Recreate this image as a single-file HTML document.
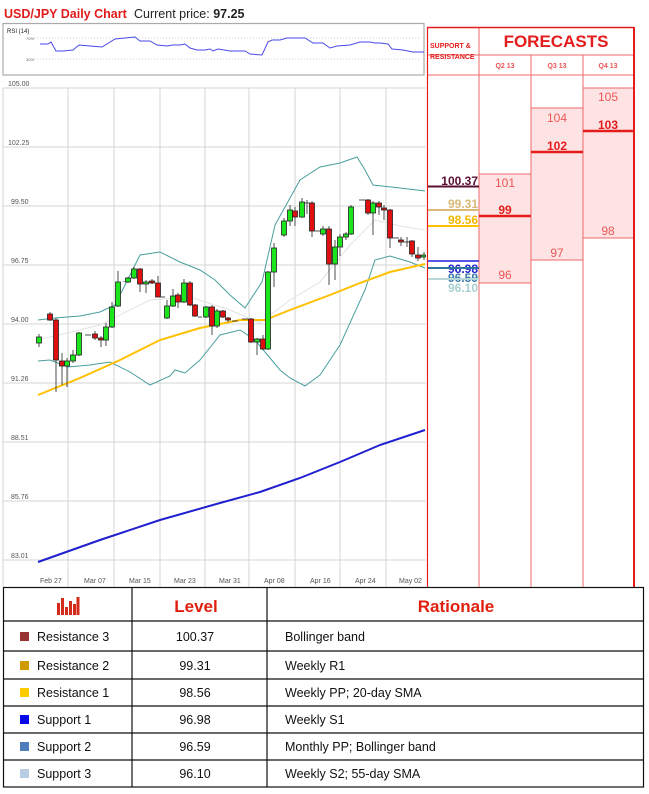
<!DOCTYPE html>
<html><head><meta charset="utf-8"><style>
body{margin:0;width:649px;height:794px;background:#fff;overflow:hidden;font-family:"Liberation Sans",sans-serif}
svg{position:absolute;left:0;top:0}
</style></head><body>
<svg width="649" height="794" viewBox="0 0 649 794" font-family="Liberation Sans, sans-serif">
<text x="4" y="18" fill="#e31b1b" font-size="12.5" font-weight="bold">USD/JPY Daily Chart</text>
<text x="134" y="18" fill="#222" font-size="12.5">Current price: <tspan font-weight="bold">97.25</tspan></text>
<!-- RSI -->
<rect x="3" y="23.5" width="421" height="51.5" fill="#fff" stroke="#aaa" stroke-width="1.2"/>
<text x="7" y="33" font-size="6" fill="#222">RSI (14)</text>
<text x="26" y="40" font-size="4" fill="#666">70%</text><text x="26" y="61" font-size="4" fill="#666">30%</text>
<line x1="34" y1="38" x2="420" y2="38" stroke="#999" stroke-dasharray="1,2" stroke-width="0.6"/>
<line x1="34" y1="59" x2="420" y2="59" stroke="#999" stroke-dasharray="1,2" stroke-width="0.6"/>
<polyline fill="none" stroke="#4a4ae8" stroke-width="1" points="40,44 48,44 51,42 56,51 63,51 73,50 79,45 90,46 102,47 115,39 125,38 135,37 140,41 150,41 157,45 167,46 173,45 180,45 185,44 190,48 197,50 205,50 210,49 213,51 218,49 230,51 245,51 250,54 262,55 268,42 272,40 280,40 287,38 298,38 305,38 313,43 323,43 330,48 337,46 350,45 360,42 370,42 375,43 380,43 388,44 392,49 403,50 413,52 424,52"/>
<!-- grid -->
<g stroke="#d4d4d4" stroke-width="1">
<line x1="3" y1="88" x2="426" y2="88"/><line x1="3" y1="147" x2="426" y2="147"/><line x1="3" y1="206" x2="426" y2="206"/><line x1="3" y1="265" x2="426" y2="265"/><line x1="3" y1="324" x2="426" y2="324"/><line x1="3" y1="383" x2="426" y2="383"/><line x1="3" y1="442" x2="426" y2="442"/><line x1="3" y1="501" x2="426" y2="501"/><line x1="3" y1="560" x2="426" y2="560"/>
<line x1="3" y1="88" x2="3" y2="587"/>
<line x1="68" y1="88" x2="68" y2="587"/><line x1="114" y1="88" x2="114" y2="587"/><line x1="160" y1="88" x2="160" y2="587"/><line x1="205" y1="88" x2="205" y2="587"/><line x1="249" y1="88" x2="249" y2="587"/><line x1="295" y1="88" x2="295" y2="587"/><line x1="340" y1="88" x2="340" y2="587"/><line x1="386" y1="88" x2="386" y2="587"/>
</g>
<g font-size="7" fill="#555">
<text x="8" y="86">105.00</text><text x="8" y="145">102.25</text><text x="11" y="204">99.50</text><text x="11" y="263">96.75</text><text x="11" y="322">94.00</text><text x="11" y="381">91.26</text><text x="11" y="440">88.51</text><text x="11" y="499">85.76</text><text x="11" y="558">83.01</text>
<text x="40" y="583">Feb 27</text><text x="84" y="583">Mar 07</text><text x="129" y="583">Mar 15</text><text x="174" y="583">Mar 23</text><text x="219" y="583">Mar 31</text><text x="264" y="583">Apr 08</text><text x="310" y="583">Apr 16</text><text x="355" y="583">Apr 24</text><text x="399" y="583">May 02</text>
</g>
<!-- indicators -->
<polyline fill="none" stroke="#e2e2e2" stroke-width="1" points="38,340 100,325 150,300 190,297 230,310 260,323 290,300 320,282 350,245 375,220 400,226 425,230"/>
<polyline fill="none" stroke="#4a9e9e" stroke-width="1" points="38,320 55,318 80,316 100,312 115,305 125,285 140,255 160,252 180,262 200,270 215,280 230,295 245,308 262,282 275,225 300,180 320,167 340,163 357,157 365,170 373,185 400,188 425,191"/>
<polyline fill="none" stroke="#4a9e9e" stroke-width="1" points="38,361 50,360 68,367 90,365 110,362 130,372 150,385 170,376 175,370 185,373 200,360 220,335 240,330 255,340 265,352 280,370 290,378 305,386 320,375 340,345 365,290 375,260 390,256 410,262 425,268"/>
<polyline fill="none" stroke="#ffc000" stroke-width="2" points="38,395 80,378 120,360 160,340 200,328 240,320 265,320 290,310 330,295 360,283 390,272 425,264"/>
<polyline fill="none" stroke="#2020d0" stroke-width="2" points="38,562 100,540 160,520 220,503 260,492 300,478 340,462 380,445 425,430"/>
<!-- candles -->
<g stroke="#222" stroke-width="0.8">
<line x1="39" y1="334" x2="39" y2="347"/><rect x="36.5" y="337" width="5" height="6" fill="#1be61b"/>
<line x1="50" y1="312" x2="50" y2="321"/><rect x="47.5" y="314" width="5" height="6" fill="#e01010"/>
<line x1="56" y1="318" x2="56" y2="392"/><rect x="53.5" y="320" width="5" height="40" fill="#e01010"/>
<line x1="62" y1="353" x2="62" y2="385"/><rect x="59.5" y="361" width="5" height="5" fill="#e01010"/>
<line x1="67" y1="358" x2="67" y2="387"/><rect x="64.5" y="361" width="5" height="5" fill="#1be61b"/>
<line x1="73" y1="350" x2="73" y2="363"/><rect x="70.5" y="355" width="5" height="6" fill="#1be61b"/>
<line x1="79" y1="332" x2="79" y2="356"/><rect x="76.5" y="333" width="5" height="22" fill="#1be61b"/>
<line x1="85" y1="335" x2="91" y2="335"/>
<line x1="95" y1="331" x2="95" y2="340"/><rect x="92.5" y="334" width="5" height="4" fill="#e01010"/>
<line x1="101" y1="336" x2="101" y2="347"/><rect x="98.5" y="338" width="5" height="2" fill="#e01010"/>
<line x1="106" y1="323" x2="106" y2="346"/><rect x="103.5" y="327" width="5" height="13" fill="#1be61b"/>
<line x1="112" y1="302" x2="112" y2="328"/><rect x="109.5" y="307" width="5" height="20" fill="#1be61b"/>
<line x1="118" y1="271" x2="118" y2="307"/><rect x="115.5" y="282" width="5" height="24" fill="#1be61b"/>
<line x1="124" y1="281" x2="124" y2="282"/>
<line x1="128" y1="277" x2="128" y2="283"/><rect x="125.5" y="278" width="5" height="4" fill="#1be61b"/>
<line x1="134" y1="267" x2="134" y2="279"/><rect x="131.5" y="269" width="5" height="9" fill="#1be61b"/>
<line x1="140" y1="268" x2="140" y2="292"/><rect x="137.5" y="269" width="5" height="15" fill="#e01010"/>
<line x1="146" y1="280" x2="146" y2="293"/><rect x="143.5" y="282" width="5" height="2" fill="#1be61b"/>
<line x1="152" y1="279" x2="152" y2="284"/><rect x="149.5" y="281" width="5" height="2" fill="#e01010"/>
<line x1="158" y1="276" x2="158" y2="297"/><rect x="155.5" y="283" width="5" height="14" fill="#e01010"/>
<line x1="161" y1="297" x2="165" y2="297"/>
<line x1="167" y1="300" x2="167" y2="319"/><rect x="164.5" y="306" width="5" height="12" fill="#1be61b"/>
<line x1="173" y1="289" x2="173" y2="307"/><rect x="170.5" y="296" width="5" height="10" fill="#1be61b"/>
<line x1="178" y1="293" x2="178" y2="308"/><rect x="175.5" y="295" width="5" height="7" fill="#e01010"/>
<line x1="184" y1="279" x2="184" y2="303"/><rect x="181.5" y="283" width="5" height="19" fill="#1be61b"/>
<line x1="190" y1="281" x2="190" y2="306"/><rect x="187.5" y="283" width="5" height="22" fill="#e01010"/>
<line x1="195" y1="304" x2="195" y2="317"/><rect x="192.5" y="305" width="5" height="11" fill="#e01010"/>
<line x1="198" y1="317" x2="202" y2="317"/>
<line x1="206" y1="306" x2="206" y2="318"/><rect x="203.5" y="307" width="5" height="10" fill="#1be61b"/>
<line x1="212" y1="305" x2="212" y2="335"/><rect x="209.5" y="307" width="5" height="19" fill="#e01010"/>
<line x1="217" y1="309" x2="217" y2="328"/><rect x="214.5" y="311" width="5" height="15" fill="#1be61b"/>
<line x1="223" y1="310" x2="223" y2="318"/><rect x="220.5" y="311" width="5" height="6" fill="#e01010"/>
<line x1="228" y1="317" x2="228" y2="322"/><rect x="225.5" y="318" width="5" height="2" fill="#e01010"/>
<line x1="232" y1="321" x2="238" y2="321"/>
<line x1="242" y1="319" x2="248" y2="319"/>
<line x1="251" y1="318" x2="251" y2="343"/><rect x="248.5" y="319" width="5" height="23" fill="#e01010"/>
<line x1="257" y1="338" x2="257" y2="355"/><rect x="254.5" y="339" width="5" height="3" fill="#1be61b"/>
<line x1="263" y1="335" x2="263" y2="350"/><rect x="260.5" y="339" width="5" height="10" fill="#e01010"/>
<line x1="268" y1="271" x2="268" y2="350"/><rect x="265.5" y="272" width="5" height="77" fill="#1be61b"/>
<line x1="274" y1="243" x2="274" y2="287"/><rect x="271.5" y="248" width="5" height="24" fill="#1be61b"/>
<line x1="284" y1="218" x2="284" y2="237"/><rect x="281.5" y="221" width="5" height="14" fill="#1be61b"/>
<line x1="290" y1="205" x2="290" y2="226"/><rect x="287.5" y="210" width="5" height="11" fill="#1be61b"/>
<line x1="295" y1="207" x2="295" y2="226"/><rect x="292.5" y="211" width="5" height="6" fill="#e01010"/>
<line x1="302" y1="198" x2="302" y2="218"/><rect x="299.5" y="202" width="5" height="15" fill="#1be61b"/>
<line x1="307" y1="200" x2="307" y2="214"/><line x1="304" y1="203" x2="310" y2="203"/>
<line x1="312" y1="201" x2="312" y2="237"/><rect x="309.5" y="203" width="5" height="28" fill="#e01010"/>
<line x1="315" y1="231" x2="321" y2="231"/>
<line x1="323" y1="226" x2="323" y2="236"/><rect x="320.5" y="229" width="5" height="5" fill="#1be61b"/>
<line x1="329" y1="226" x2="329" y2="285"/><rect x="326.5" y="229" width="5" height="35" fill="#e01010"/>
<line x1="335" y1="240" x2="335" y2="280"/><rect x="332.5" y="247" width="5" height="17" fill="#1be61b"/>
<line x1="340" y1="234" x2="340" y2="256"/><rect x="337.5" y="237" width="5" height="10" fill="#1be61b"/>
<line x1="346" y1="232" x2="346" y2="240"/><rect x="343.5" y="234" width="5" height="3" fill="#1be61b"/>
<line x1="351" y1="205" x2="351" y2="235"/><rect x="348.5" y="207" width="5" height="27" fill="#1be61b"/>
<line x1="359" y1="200" x2="365" y2="200"/>
<line x1="368" y1="199" x2="368" y2="215"/><rect x="365.5" y="200" width="5" height="13" fill="#e01010"/>
<line x1="373" y1="201" x2="373" y2="235"/><rect x="370.5" y="203" width="5" height="10" fill="#1be61b"/>
<line x1="379" y1="201" x2="379" y2="215"/><rect x="376.5" y="203" width="5" height="4" fill="#e01010"/>
<line x1="384" y1="205" x2="384" y2="220"/><rect x="381.5" y="208" width="5" height="2" fill="#e01010"/>
<line x1="390" y1="209" x2="390" y2="248"/><rect x="387.5" y="210" width="5" height="28" fill="#e01010"/>
<line x1="393" y1="238" x2="399" y2="238"/>
<line x1="401" y1="237" x2="401" y2="246"/><rect x="398.5" y="240" width="5" height="2" fill="#e01010"/>
<line x1="407" y1="237" x2="407" y2="247"/><line x1="404" y1="242" x2="410" y2="242"/>
<line x1="412" y1="240" x2="412" y2="257"/><rect x="409.5" y="241" width="5" height="13" fill="#e01010"/>
<line x1="418" y1="247" x2="418" y2="261"/><rect x="415.5" y="255" width="5" height="3" fill="#e01010"/>
<line x1="424" y1="252" x2="424" y2="260"/><rect x="421.5" y="255" width="4" height="2" fill="#1be61b"/>
</g>
<!-- right panel -->
<rect x="479" y="174" width="52" height="109" fill="#fde3e3"/>
<rect x="531" y="108" width="52" height="152" fill="#fde3e3"/>
<rect x="583" y="88" width="51" height="150" fill="#fde3e3"/>
<g stroke="#f06a6a" stroke-width="1">
<line x1="427" y1="55" x2="634" y2="55"/><line x1="427" y1="75" x2="634" y2="75"/>
<line x1="479" y1="27" x2="479" y2="587"/><line x1="531" y1="55" x2="531" y2="587"/><line x1="583" y1="55" x2="583" y2="587"/>
<line x1="479" y1="174" x2="531" y2="174"/><line x1="479" y1="283" x2="531" y2="283"/>
<line x1="531" y1="108" x2="583" y2="108"/><line x1="531" y1="260" x2="583" y2="260"/>
<line x1="583" y1="88" x2="634" y2="88"/><line x1="583" y1="238" x2="634" y2="238"/>
</g>
<line x1="427" y1="27.5" x2="634" y2="27.5" stroke="#e51c1c" stroke-width="1.5"/>
<line x1="427.5" y1="27" x2="427.5" y2="587" stroke="#e51c1c" stroke-width="1.2"/>
<line x1="634" y1="27" x2="634" y2="587" stroke="#e51c1c" stroke-width="2"/>
<g stroke="#e51c1c" stroke-width="2.5">
<line x1="479" y1="216" x2="531" y2="216"/><line x1="531" y1="152" x2="583" y2="152"/><line x1="583" y1="131" x2="634" y2="131"/>
</g>
<text x="430" y="48" font-size="7" font-weight="bold" fill="#e51c1c">SUPPORT &amp;</text>
<text x="430" y="59" font-size="7" font-weight="bold" fill="#e51c1c">RESISTANCE</text>
<text x="556" y="47" font-size="17" font-weight="bold" fill="#e51c1c" text-anchor="middle">FORECASTS</text>
<g font-size="7" font-weight="bold" fill="#e55" text-anchor="middle"><text x="505" y="68">Q2 13</text><text x="557" y="68">Q3 13</text><text x="608" y="68">Q4 13</text></g>
<g font-size="12" fill="#e55" text-anchor="middle">
<text x="505" y="187">101</text><text x="505" y="279">96</text>
<text x="557" y="122">104</text><text x="557" y="257">97</text>
<text x="608" y="101">105</text><text x="608" y="235">98</text>
</g>
<g font-size="12" fill="#e51c1c" font-weight="bold" text-anchor="middle">
<text x="505" y="214">99</text><text x="557" y="150">102</text><text x="608" y="129">103</text>
</g>
<g font-size="12" font-weight="bold" text-anchor="end">
<text x="478" y="185" fill="#5a1030">100.37</text>
<text x="478" y="208" fill="#d9b878">99.31</text>
<text x="478" y="224" fill="#f2b800">98.56</text>
<text x="478" y="273" fill="#2020d0">96.98</text>
<text x="478" y="282" fill="#3a7aa8">96.59</text>
<text x="478" y="292" fill="#a8d0d0">96.10</text>
</g>
<line x1="428" y1="186.5" x2="479" y2="186.5" stroke="#5a1030" stroke-width="2"/>
<line x1="428" y1="210" x2="479" y2="210" stroke="#d9b878" stroke-width="2"/>
<line x1="428" y1="226" x2="479" y2="226" stroke="#ffc000" stroke-width="2"/>
<line x1="428" y1="261" x2="479" y2="261" stroke="#2020e0" stroke-width="1.5"/>
<line x1="428" y1="268" x2="479" y2="268" stroke="#2e75a0" stroke-width="2"/>
<line x1="428" y1="279" x2="479" y2="279" stroke="#b8d8d8" stroke-width="2"/>
<!-- table -->
<g stroke="#111" stroke-width="1.2" fill="none">
<rect x="3.5" y="587.5" width="640" height="199.5"/>
<line x1="3" y1="621" x2="644" y2="621"/><line x1="3" y1="651" x2="644" y2="651"/><line x1="3" y1="679" x2="644" y2="679"/><line x1="3" y1="706" x2="644" y2="706"/><line x1="3" y1="733" x2="644" y2="733"/><line x1="3" y1="760" x2="644" y2="760"/>
<line x1="132" y1="587" x2="132" y2="787"/><line x1="267" y1="587" x2="267" y2="787"/>
</g>
<g fill="#d42a1a"><rect x="57" y="603" width="3" height="12"/><rect x="61" y="598" width="3" height="17"/><rect x="65" y="607" width="3" height="8"/><rect x="69" y="601" width="3" height="14"/><rect x="73" y="604" width="3" height="11"/><rect x="76.5" y="597" width="3" height="18"/></g>
<text x="196" y="612" font-size="17" font-weight="bold" fill="#e0200f" text-anchor="middle">Level</text>
<text x="456" y="612" font-size="17" font-weight="bold" fill="#e0200f" text-anchor="middle">Rationale</text>
<rect x="20" y="632" width="9" height="9" fill="#993333"/>
<rect x="20" y="661" width="9" height="9" fill="#d09a00"/>
<rect x="20" y="688" width="9" height="9" fill="#ffcc00"/>
<rect x="20" y="715" width="9" height="9" fill="#0a0ae8"/>
<rect x="20" y="742" width="9" height="9" fill="#4f7ebd"/>
<rect x="20" y="769" width="9" height="9" fill="#b8cce4"/>
<g font-size="12.5" fill="#111">
<text x="37" y="641">Resistance 3</text><text x="37" y="670">Resistance 2</text><text x="37" y="697">Resistance 1</text><text x="37" y="724">Support 1</text><text x="37" y="751">Support 2</text><text x="37" y="778">Support 3</text>
<g text-anchor="middle"><text x="195" y="641">100.37</text><text x="195" y="670">99.31</text><text x="195" y="697">98.56</text><text x="195" y="724">96.98</text><text x="195" y="751">96.59</text><text x="195" y="778">96.10</text></g>
<text x="285" y="641">Bollinger band</text><text x="285" y="670">Weekly R1</text><text x="285" y="697">Weekly PP; 20-day SMA</text><text x="285" y="724">Weekly S1</text><text x="285" y="751">Monthly PP; Bollinger band</text><text x="285" y="778">Weekly S2; 55-day SMA</text>
</g>
</svg>
</body></html>
